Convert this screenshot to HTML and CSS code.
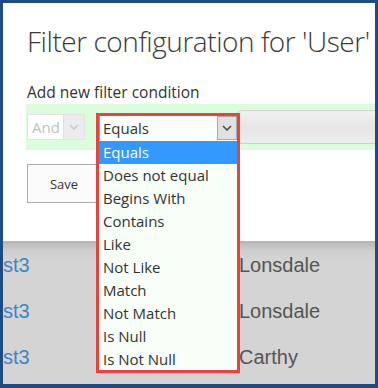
FILE: index.html
```html
<!DOCTYPE html>
<html>
<head>
<meta charset="utf-8">
<link rel="stylesheet" href="styles.css">
</head>
<body>
<div class="frame">
  <div class="modal">
    <h1 class="title">Filter configuration for 'User'</h1>
    <div class="subtitle">Add new filter condition</div>
    <div class="band">
      <div class="and-select">
        <span class="and-text">And</span>
        <span class="and-btn"><svg width="10" height="6" viewBox="0 0 10 6"><path d="M1 1 L5 5 L9 1" fill="none" stroke="#c8c8c8" stroke-width="1.5"/></svg></span>
      </div>
      <div class="op-slot"></div>
      <div class="value-input"></div>
    </div>
    <button class="save">Save</button>
  </div>
  <div class="grid">
    <div class="row"><span class="c1">st3</span><span class="c2">Lonsdale</span></div>
    <div class="row"><span class="c1">st3</span><span class="c2">Lonsdale</span></div>
    <div class="row"><span class="c1">st3</span><span class="c2">Carthy</span></div>
  </div>
  <div class="dropdown">
    <div class="dd-select">
      <span class="dd-value">Equals</span>
      <span class="dd-btn"><svg width="10" height="6" viewBox="0 0 10 6"><path d="M1 1 L5 5 L9 1" fill="none" stroke="#444" stroke-width="1.5"/></svg></span>
    </div>
    <ul class="dd-list">
      <li class="on">Equals</li>
      <li>Does not equal</li>
      <li>Begins With</li>
      <li>Contains</li>
      <li>Like</li>
      <li>Not Like</li>
      <li>Match</li>
      <li>Not Match</li>
      <li>Is Null</li>
      <li>Is Not Null</li>
    </ul>
  </div>
</div>
</body>
</html>
```
FILE: styles.css
```css
html, body {
  margin: 0;
  padding: 0;
  background: #1e4b83;
}
.frame {
  position: relative;
  width: 372px;
  height: 381px;
  border-top: 3px solid #1e4b83;
  border-left: 3px solid #1e4b83;
  border-right: 3px solid #1e4b83;
  border-bottom: 4px solid #1e4b83;
  overflow: hidden;
  display: flex;
  flex-direction: column;
  font-family: "Open Sans", "Noto Sans", sans-serif;
  color: #333;
}
.modal {
  background: #fff;
  height: 238px;
  padding-left: 24px;
  box-sizing: border-box;
  display: flex;
  flex-direction: column;
  align-items: flex-start;
}
.title {
  margin: 20px 0 0 0;
  font-size: 28px;
  font-weight: 300;
  line-height: 36px;
  letter-spacing: -0.45px;
  white-space: nowrap;
  color: #3a3a3a;
}
.subtitle {
  margin-top: 23px;
  font-size: 15.5px;
  line-height: 20px;
  white-space: nowrap;
}
.band {
  margin-top: 2px;
  margin-left: -1px;
  width: 400px;
  height: 46px;
  background: #dcfddc;
  display: flex;
  align-items: center;
  padding-left: 1px;
  box-sizing: border-box;
}
.and-select {
  width: 61px;
  height: 26px;
  box-sizing: border-box;
  border: 1px solid #e4e4e4;
  background: #fff;
  display: flex;
}
.and-text {
  flex: 1;
  font-size: 15px;
  line-height: 24px;
  padding-left: 4px;
  color: #c0c0c0;
}
.and-btn {
  width: 20px;
  background: #ececec;
  border-left: 1px solid #e0e0e0;
  display: flex;
  align-items: center;
  justify-content: center;
}
.op-slot {
  width: 158px;
}
.value-input {
  width: 200px;
  height: 34px;
  box-sizing: border-box;
  border: 1px solid #cfcfcf;
  border-radius: 6px;
  background: linear-gradient(#f1f1f1, #e6e6e6 50%, #ececec);
}
.save {
  margin-top: 14px;
  width: 74px;
  height: 39px;
  border: 1px solid #acacac;
  background: #fbfbfb;
  font-family: "Open Sans", "Noto Sans", sans-serif;
  font-size: 13px;
  color: #333;
  padding: 0;
}
.grid {
  flex: 1;
  background: linear-gradient(#b4b4b4 0px, #cfcfcf 10px, #d4d4d4 20px, #d4d4d4);
  padding-top: 1px;
  font-family: "Liberation Sans", Arial, sans-serif;
  font-size: 20px;
}
.row {
  height: 46px;
  display: flex;
  align-items: center;
}
.c1 {
  width: 236px;
  color: #3b87c4;
}
.c2 {
  color: #555;
}
.dropdown {
  position: absolute;
  left: 93px;
  top: 110px;
  width: 144px;
  height: 260px;
  box-sizing: border-box;
  border: 3px solid #e4453e;
  background: #f8fff8;
}
.dd-select {
  height: 24px;
  display: flex;
  background: #fbfffb;
  border-left: 1px solid #8aa;
}
.dd-value {
  flex: 1;
  font-size: 15px;
  line-height: 24px;
  padding-left: 3px;
}
.dd-btn {
  width: 20px;
  box-sizing: border-box;
  background: #e1e1e1;
  border: 1px solid #a8a8a8;
  display: flex;
  align-items: center;
  justify-content: center;
}
.dd-list {
  list-style: none;
  margin: 1px 0 0 0;
  padding: 0;
}
.dd-list li {
  height: 23px;
  line-height: 23px;
  padding-left: 4px;
  font-size: 15px;
  white-space: nowrap;
}
.dd-list li.on {
  background: #3399ff;
  color: #fff;
}
```
